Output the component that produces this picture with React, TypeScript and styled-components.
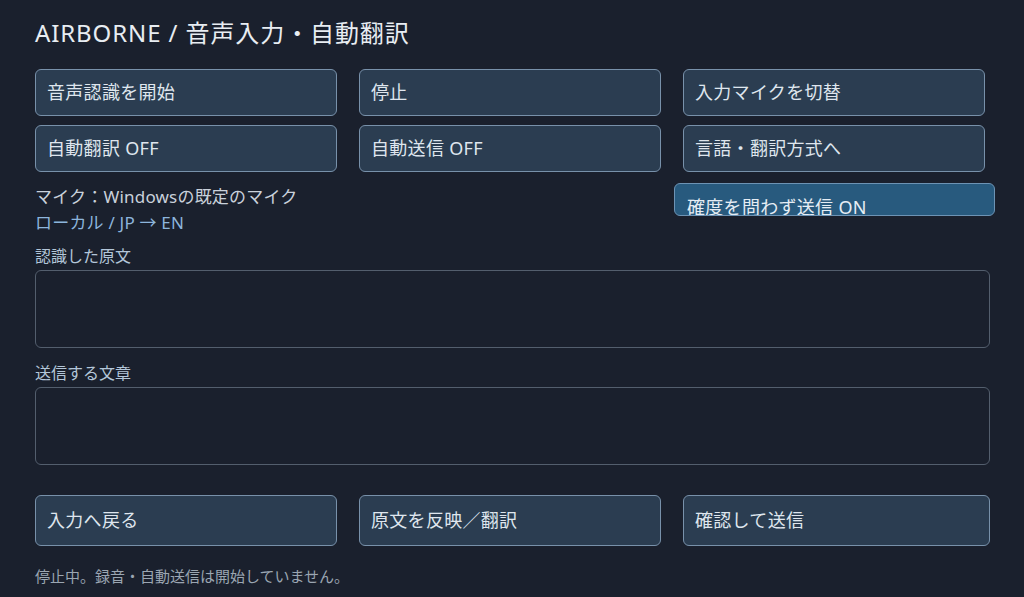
import React from "react";
import styled, { createGlobalStyle } from "styled-components";

const GlobalStyle = createGlobalStyle`
  html, body {
    margin: 0;
    padding: 0;
    background-color: #1a202d;
  }
  body {
    font-family: "Noto Sans", "Noto Sans CJK JP", sans-serif;
    color: #dfe6ee;
  }
  * {
    box-sizing: border-box;
  }
`;

const Page = styled.div`
  width: 1024px;
  height: 597px;
  overflow: hidden;
  padding: 17px 34px 0 35px;
  background-color: #1a202d;
`;

const Title = styled.h1`
  margin: 0 0 20px;
  font-size: 24px;
  line-height: 32px;
  font-weight: 400;
  letter-spacing: 0.9px;
  color: #e8edf2;
`;

const ButtonGrid = styled.div<{ $cols: string }>`
  display: grid;
  grid-template-columns: ${(p) => p.$cols};
  column-gap: 22px;
  row-gap: 9px;
`;

const ActionButton = styled.button<{ $tall?: boolean }>`
  height: ${(p) => (p.$tall ? "51px" : "47px")};
  padding: 0 11px 4px;
  text-align: left;
  font-family: inherit;
  font-size: 18px;
  letter-spacing: 0.3px;
  color: #dfe6ee;
  background-color: #2b3d51;
  border: 1px solid #7891aa;
  border-radius: 6px;
  outline: none;
`;

const InfoRow = styled.div`
  display: grid;
  grid-template-columns: 626px 1fr;
  column-gap: 22px;
  margin-top: 11px;
`;

const InfoText = styled.div`
  padding-top: 1px;
  font-size: 17px;
  line-height: 26px;
  letter-spacing: 0.2px;
`;

const MicLine = styled.div`
  color: #c9d1db;
`;

const RouteLine = styled.div`
  color: #8db5dc;
`;

const ToggleButton = styled.button`
  height: 33px;
  margin: 0 -5px 0 -9px;
  padding: 11px 12px 0;
  overflow: hidden;
  text-align: left;
  font-family: inherit;
  font-size: 18px;
  line-height: 24px;
  letter-spacing: 0.3px;
  color: #e6edf4;
  background-color: #285a7e;
  border: 1px solid #6d93b4;
  border-radius: 6px;
  outline: none;
`;

const FieldLabel = styled.div<{ $gap: number }>`
  margin: ${(p) => p.$gap}px 0 4px;
  font-size: 16px;
  line-height: 20px;
  color: #b3c6d9;
`;

const TextBox = styled.textarea`
  display: block;
  width: 955px;
  height: 78px;
  resize: none;
  padding: 8px 12px;
  font-family: inherit;
  font-size: 16px;
  color: #dfe6ee;
  background-color: #1a202d;
  border: 1px solid #535e6d;
  border-radius: 6px;
  outline: none;
`;

const BottomRow = styled.div`
  margin-top: 30px;
`;

const Status = styled.div`
  margin-top: 20px;
  font-size: 15px;
  line-height: 20px;
  color: #9ba6b2;
`;

export default function App() {
  return (
    <>
      <GlobalStyle />
      <Page>
        <Title>AIRBORNE / 音声入力・自動翻訳</Title>
        <ButtonGrid $cols="302px 302px 302px">
          <ActionButton>音声認識を開始</ActionButton>
          <ActionButton>停止</ActionButton>
          <ActionButton>入力マイクを切替</ActionButton>
          <ActionButton>自動翻訳 OFF</ActionButton>
          <ActionButton>自動送信 OFF</ActionButton>
          <ActionButton>言語・翻訳方式へ</ActionButton>
        </ButtonGrid>
        <InfoRow>
          <InfoText>
            <MicLine>マイク：Windowsの既定のマイク</MicLine>
            <RouteLine>ローカル / JP → EN</RouteLine>
          </InfoText>
          <ToggleButton>確度を問わず送信 ON</ToggleButton>
        </InfoRow>
        <FieldLabel $gap={10}>認識した原文</FieldLabel>
        <TextBox />
        <FieldLabel $gap={15}>送信する文章</FieldLabel>
        <TextBox />
        <BottomRow>
          <ButtonGrid $cols="302px 302px 307px">
            <ActionButton $tall>入力へ戻る</ActionButton>
            <ActionButton $tall>原文を反映／翻訳</ActionButton>
            <ActionButton $tall>確認して送信</ActionButton>
          </ButtonGrid>
        </BottomRow>
        <Status>停止中。録音・自動送信は開始していません。</Status>
      </Page>
    </>
  );
}
